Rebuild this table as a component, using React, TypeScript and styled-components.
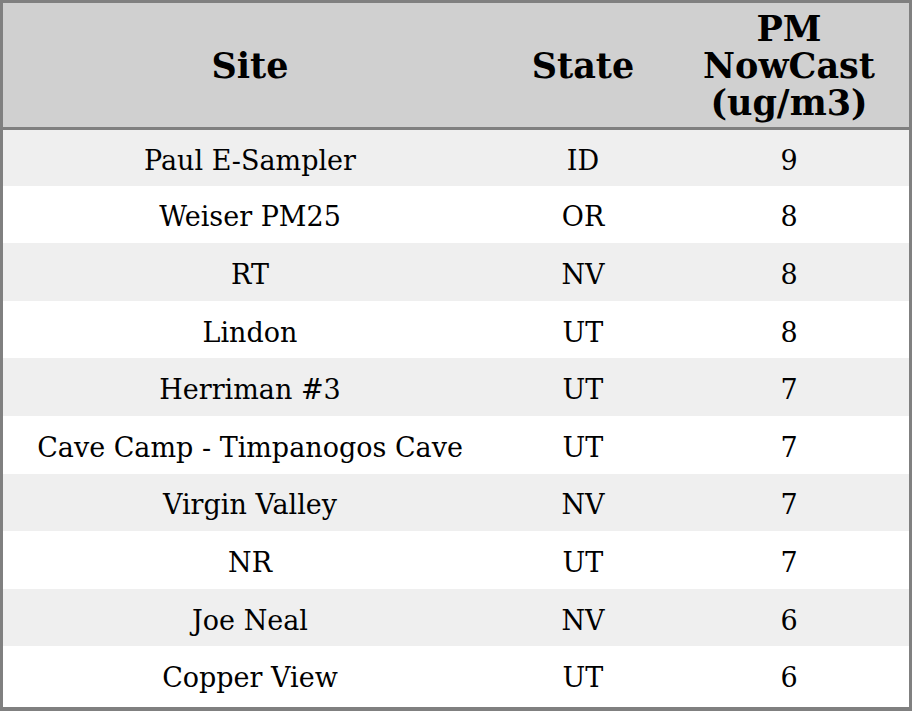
import React from "react";
import styled, { createGlobalStyle } from "styled-components";

const Global = createGlobalStyle`
  html, body { margin: 0; padding: 0; background: #ffffff; }
  body { font-family: "DejaVu Serif", serif; color: #000; }
`;

const Frame = styled.div`
  width: 912px;
  height: 711px;
  box-sizing: border-box;
  border: 3px solid #808080;
  border-bottom-width: 4px;
  display: flex;
  flex-direction: column;
`;

const Table = styled.table`
  width: 906px;
  border-collapse: collapse;
  table-layout: fixed;
`;

const HeadCell = styled.th<{ $w: number }>`
  width: ${(p) => p.$w}px;
  height: 125px;
  padding: 3px 2px 0;
  box-sizing: border-box;
  background: #d0d0d0;
  border-bottom: 3px solid #808080;
  font-size: 35px;
  font-weight: bold;
  text-align: center;
  vertical-align: middle;
  line-height: 36.6px;
`;

const Row = styled.tr<{ $alt: boolean }>`
  height: 57.6px;
  background: ${(p) => (p.$alt ? "#efefef" : "#ffffff")};
`;

const Cell = styled.td`
  padding: 5px 0 0;
  font-size: 27px;
  text-align: center;
  vertical-align: middle;
`;

const rows: [string, string, string][] = [
  ["Paul E-Sampler", "ID", "9"],
  ["Weiser PM25", "OR", "8"],
  ["RT", "NV", "8"],
  ["Lindon", "UT", "8"],
  ["Herriman #3", "UT", "7"],
  ["Cave Camp - Timpanogos Cave", "UT", "7"],
  ["Virgin Valley", "NV", "7"],
  ["NR", "UT", "7"],
  ["Joe Neal", "NV", "6"],
  ["Copper View", "UT", "6"],
];

export default function App() {
  return (
    <>
      <Global />
      <Frame>
        <Table>
          <thead>
            <tr>
              <HeadCell $w={494}>Site</HeadCell>
              <HeadCell $w={172}>State</HeadCell>
              <HeadCell $w={240}>
                PM
                <br />
                NowCast
                <br />
                (ug/m3)
              </HeadCell>
            </tr>
          </thead>
          <tbody>
            {rows.map((r, i) => (
              <Row key={i} $alt={i % 2 === 0}>
                <Cell>{r[0]}</Cell>
                <Cell>{r[1]}</Cell>
                <Cell>{r[2]}</Cell>
              </Row>
            ))}
          </tbody>
        </Table>
      </Frame>
    </>
  );
}
